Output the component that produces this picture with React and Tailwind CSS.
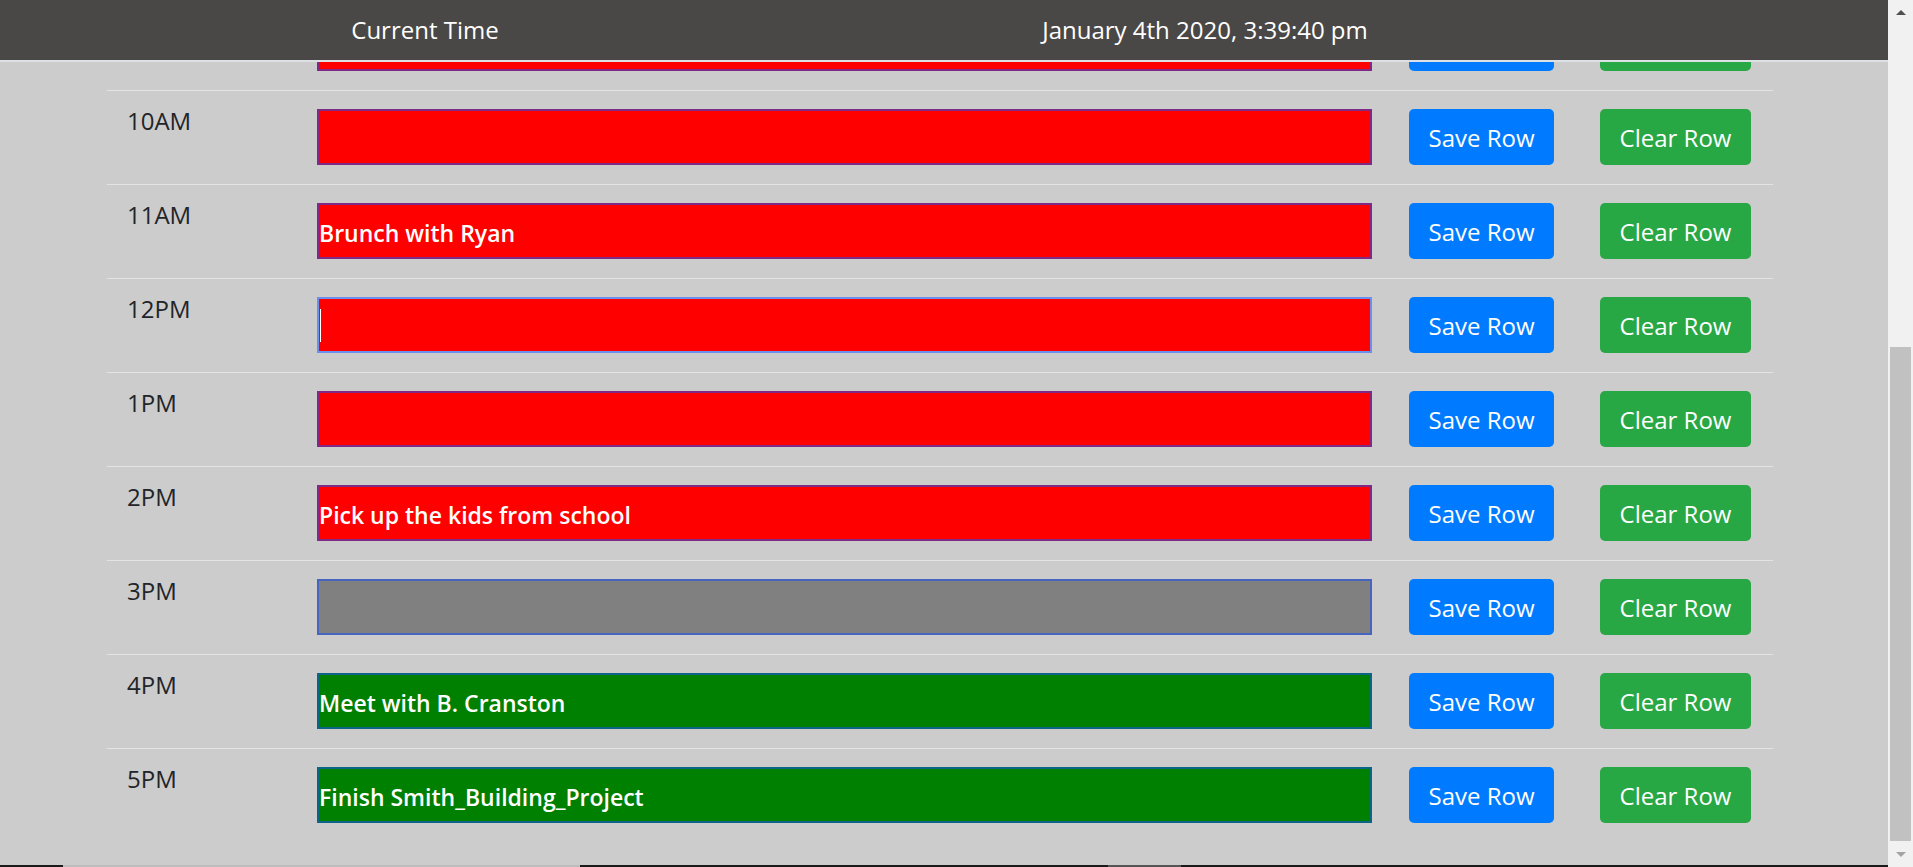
import React from "react";

const rows = [
  { hour: "9AM", text: "", tone: "past" },
  { hour: "10AM", text: "", tone: "past" },
  { hour: "11AM", text: "Brunch with Ryan", tone: "past" },
  { hour: "12PM", text: "", tone: "past", focused: true },
  { hour: "1PM", text: "", tone: "past" },
  { hour: "2PM", text: "Pick up the kids from school", tone: "past" },
  { hour: "3PM", text: "", tone: "present" },
  { hour: "4PM", text: "Meet with B. Cranston", tone: "future" },
  { hour: "5PM", text: "Finish Smith_Building_Project", tone: "future" },
];

const toneClass = {
  past: "bg-[#ff0000]",
  present: "bg-[#808080]",
  future: "bg-[#008000]",
};

function HourRow({ hour, text, tone, focused }) {
  return (
    <div className="flex items-start border-t border-[#e4e4e4] pb-[19px]">
      <div className="w-[210px] pl-[20px] pt-[12px] text-[24px] leading-[36px] text-[#212529]">
        {hour}
      </div>
      <div className="relative mt-[18px] w-[1055px] h-[56px]">
        <input
          type="text"
          readOnly
          value={text}
          className={`w-full h-full border-2 px-0 pt-[3px] text-[23px] font-semibold text-white outline-none ${toneClass[tone]} ${
            focused ? "border-[#6b8ff0]" : "border-[rgba(22,77,244,0.55)]"
          }`}
        />
        {/* caret of the focused box */}
        {focused && <span className="absolute left-[3px] top-[12px] h-[33px] w-px bg-white" />}
      </div>
      <button className="ml-[37px] mt-[18px] h-[56px] w-[145px] rounded-[5px] bg-[#007bff] pt-[2px] text-[24px] text-white">
        Save Row
      </button>
      <button className="ml-[46px] mt-[18px] h-[56px] w-[151px] rounded-[5px] bg-[#28a745] pt-[2px] text-[24px] text-white">
        Clear Row
      </button>
    </div>
  );
}

export default function App() {
  return (
    <div className="flex h-screen w-full overflow-hidden bg-[#cccccc] font-['Open_Sans',sans-serif]">
      <div className="flex min-w-0 flex-1 flex-col">
        <header className="flex h-[62px] shrink-0 items-center border-b-2 border-[#dde0e4] bg-[#4a4846] text-[24px] font-medium text-white">
          <div className="w-[850px] text-center">Current Time</div>
          <div className="w-[710px] text-center">January 4th 2020, 3:39:40 pm</div>
        </header>

        <main className="flex-1 overflow-hidden">
          <div className="ml-[107px] -mt-[66px] w-[1666px]">
            {rows.map((r) => (
              <HourRow key={r.hour} {...r} />
            ))}
          </div>
        </main>

        {/* taskbar edge */}
        <div className="flex h-[2px] shrink-0 bg-[#1a1a1a]">
          <div className="ml-[63px] w-[517px] bg-[#bdbdbd]" />
          <div className="ml-[528px] w-[73px] bg-[#555555]" />
        </div>
      </div>

      {/* scrollbar */}
      <div className="flex w-[25px] shrink-0 flex-col bg-[#f1f1f1]">
        <div className="flex h-[24px] items-center justify-center">
          <span className="h-0 w-0 border-x-[5px] border-b-[5px] border-x-transparent border-b-[#505050]" />
        </div>
        <div className="flex-1" />
        <div className="mx-[2px] h-[494px] bg-[#c1c1c1]" />
        <div className="flex h-[26px] items-center justify-center">
          <span className="h-0 w-0 border-x-[5px] border-t-[5px] border-x-transparent border-t-[#a3a3a3]" />
        </div>
      </div>
    </div>
  );
}
